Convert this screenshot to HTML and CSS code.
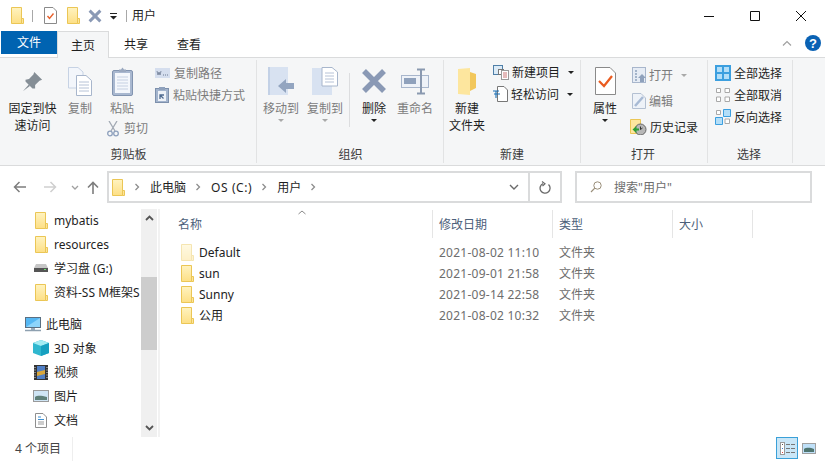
FILE: index.html
```html
<!DOCTYPE html>
<html lang="zh">
<head>
<meta charset="utf-8">
<title>用户</title>
<link rel="stylesheet" href="styles.css">
</head>
<body>
<svg class="defs" width="0" height="0" aria-hidden="true">
  <defs>
    <linearGradient id="fg" x1="0" y1="0" x2="0" y2="1"><stop offset="0" stop-color="#fff3c0"/><stop offset="1" stop-color="#fddf85"/></linearGradient>
    <symbol id="folder" viewBox="0 0 13 17">
      <path d="M.5.5H10.5V16.5H.5Z" fill="url(#fg)" stroke="#ebc655"/>
      <path d="M10.5 11.5H12.5V16.5H10.5Z" fill="#fde49a" stroke="#ebc655"/>
    </symbol>
    <symbol id="chev" viewBox="0 0 6 8"><path d="M1.5 1L4.500 4L1.500 7" fill="none" stroke="#8d8d8d" stroke-width="1.300"/></symbol>
    <symbol id="x" viewBox="0 0 26 26"><path d="M3 3L23 23M23 3L3 23" stroke="#8a99b5" stroke-width="5.500" fill="none"/></symbol>
  </defs>
</svg>
<div class="window">
  <header class="titlebar">
    <svg class="tb-folder" width="13" height="17"><use href="#folder"/></svg>
    <span class="tb-sep"></span>
    <svg class="tb-doc" width="13" height="17" viewBox="0 0 13 17"><path d="M.5.5H9L12.500 4V16.500H.5Z" fill="#fff" stroke="#8a8a8a"/><path d="M3.500 9L5.500 11.500L9.500 6.500" fill="none" stroke="#e8602c" stroke-width="1.400"/></svg>
    <svg class="tb-folder2" width="13" height="17"><use href="#folder"/></svg>
    <svg class="tb-x" width="14" height="14"><use href="#x"/></svg>
    <svg class="tb-caret" width="7" height="7" viewBox="0 0 7 7"><path d="M0 0H7V1H0ZM0 3H7L3.500 6.500Z" fill="#222"/></svg>
    <span class="tb-sep tb-sep2"></span>
    <span class="tb-title">用户</span>
    <div class="winctl">
      <svg width="12" height="12" viewBox="0 0 12 12"><path d="M1 6.500H11" stroke="#111"/></svg>
      <svg width="12" height="12" viewBox="0 0 12 12"><path d="M1.500 1.500H10.500V10.500H1.500Z" fill="none" stroke="#111"/></svg>
      <svg width="12" height="12" viewBox="0 0 12 12"><path d="M1 1L11 11M11 1L1 11" stroke="#111" fill="none"/></svg>
    </div>
  </header>
  <nav class="tabs">
    <span class="tab tab-file">文件</span>
    <span class="tab tab-active">主页</span>
    <span class="tab tab-share">共享</span>
    <span class="tab tab-view">查看</span>
    <span class="tabs-right">
      <svg width="10" height="6" viewBox="0 0 10 6"><path d="M1 5.500L5 1.500L9 5.500" fill="none" stroke="#a0a0a0" stroke-width="1.200"/></svg>
      <svg width="16" height="16" viewBox="0 0 16 16"><circle cx="8" cy="8" r="8" fill="#0a62b4"/><text x="8" y="12.500" text-anchor="middle" class="help-q">?</text></svg>
    </span>
  </nav>
  <section class="ribbon">
    <div class="group g-clip">
      <div class="g-body">
        <div class="big w57">
          <span class="big-icon"><svg width="21" height="21" viewBox="0 0 24 24"><path d="M14 1L23 10L20 11L15 16L15 20L12 20L4 12L4 10L8 9L13 4Z" fill="#858e96"/><path d="M8 15L1 23L9 17Z" fill="#858e96"/></svg></span>
          <span class="lbl">固定到快<br>速访问</span>
        </div>
        <div class="big w38 off">
          <span class="big-icon"><svg width="24" height="29" viewBox="0 0 24 29"><path d="M.5.500H10L15 5V21H.5Z" fill="#f3f6fb" stroke="#c6d2e4"/><path d="M8.500 8.500H18L23.500 13.500V28.500H8.500Z" fill="#fff" stroke="#a8b6cc"/><path d="M11 15H21M11 18H21M11 21H21M11 24H21" stroke="#b6c2d6"/></svg></span>
          <span class="lbl">复制</span>
        </div>
        <div class="col-paste w46 off">
          <div class="big">
            <span class="big-icon"><svg width="21" height="29" viewBox="0 0 21 29"><rect x=".5" y="3.500" width="20" height="25" rx="1.500" fill="#a9b8d0" stroke="#8294b0"/><rect x="3" y="6" width="15" height="20" fill="#f4f7fc"/><path d="M5 10H16M5 13H16M5 16H16M5 19H16M5 22H16" stroke="#c5d0e2"/><path d="M7 5V2.500H9L10.500 .5L12 2.500H14V5Z" fill="#9aa8bf"/></svg></span>
            <span class="lbl">粘贴</span>
          </div>
          <div class="cut"><svg width="12" height="16" viewBox="0 0 12 16"><path d="M2 0L8 10M10 0L4 10" stroke="#a2a9b4" stroke-width="1.300" fill="none"/><circle cx="3" cy="12.500" r="2.300" fill="none" stroke="#8ea0bd" stroke-width="1.300"/><circle cx="9" cy="12.500" r="2.300" fill="none" stroke="#8ea0bd" stroke-width="1.300"/></svg><span>剪切</span></div>
        </div>
        <div class="smalls off c-clip">
          <div class="row"><svg width="15" height="10" viewBox="0 0 15 10"><rect width="15" height="10" fill="#d5deee"/><path d="M2 3L3 7L4 4L5 7L6 3" fill="none" stroke="#6c7a92" stroke-width=".8"/><path d="M8 7H9M10 7H11M12 7H13" stroke="#6c7a92"/></svg><span>复制路径</span></div>
          <div class="row"><svg width="14" height="16" viewBox="0 0 14 16"><rect x=".5" y="1.500" width="13" height="14" fill="#a3b4cd" stroke="#7d90ac"/><rect x="3" y="4" width="8" height="10" fill="#eef2f8"/><rect x="4" y="0" width="6" height="3" fill="#8fa1bc"/><path d="M5 12V8H9M5 8L8.500 11.500" stroke="#4f6b90" stroke-width="1.300" fill="none"/></svg><span>粘贴快捷方式</span></div>
        </div>
      </div>
      <div class="g-label">剪贴板</div>
    </div>
    <div class="group g-org">
      <div class="g-body">
        <div class="big w46 off">
          <span class="big-icon"><svg width="26" height="28" viewBox="0 0 26 28"><path d="M0 0H20V28H0Z" fill="#d8e2f1"/><path d="M0 0H2V28H0Z" fill="#c3d1e6"/><path d="M10 19L18 12V16H26V22H18V26Z" fill="#93a5c0"/></svg></span>
          <span class="lbl">移动到</span><i class="caret pale"></i>
        </div>
        <div class="big w42 off">
          <span class="big-icon"><svg width="26" height="28" viewBox="0 0 26 28"><path d="M0 1H20V28H0Z" fill="#d8e2f1"/><path d="M10 .5H20L25.500 5V19H10Z" fill="#fff" stroke="#a8b6cc"/><path d="M13 6H22M13 9H22M13 12H22M13 15H22" stroke="#b6c2d6"/></svg></span>
          <span class="lbl">复制到</span><i class="caret pale"></i>
        </div>
        <span class="mini-sep"></span>
        <div class="big w44">
          <span class="big-icon"><svg width="26" height="26"><use href="#x"/></svg></span>
          <span class="lbl">删除</span><i class="caret"></i>
        </div>
        <div class="big w38 off">
          <span class="big-icon"><svg width="28" height="27" viewBox="0 0 28 27"><rect x=".5" y="7.500" width="27" height="12" fill="#eef2f8" stroke="#a8b6cc"/><rect x="3" y="10" width="12" height="6" fill="#8fa1bc"/><path d="M16 1.500H24M20 1.500V25.500M16 25.500H24" stroke="#8a99b0" stroke-width="2"/></svg></span>
          <span class="lbl">重命名</span>
        </div>
      </div>
      <div class="g-label">组织</div>
    </div>
    <div class="group g-new">
      <div class="g-body">
        <div class="big w46">
          <span class="big-icon"><svg width="19" height="27" viewBox="0 0 19 27"><path d="M12 4L18 6V20L12 23Z" fill="#f2c75c"/><path d="M0 1L12 0V27L0 26Z" fill="#fde69e"/></svg></span>
          <span class="lbl">新建<br>文件夹</span>
        </div>
        <div class="smalls c-new">
          <div class="row"><svg width="16" height="15" viewBox="0 0 16 15"><rect x=".5" y=".5" width="9" height="9" fill="#dcebf7" stroke="#4f7fa8"/><rect x="5.500" y="4.500" width="5" height="5" fill="#fff" stroke="#777"/><rect x="8.500" y="5.500" width="7" height="9" fill="#fff" stroke="#9a9a9a"/><path d="M10 8H14M10 10H14M10 12H14" stroke="#c77"/></svg><span>新建项目</span><i class="caret"></i></div>
          <div class="row"><svg width="15" height="16" viewBox="0 0 15 16"><path d="M4.500.5H11L14.500 4V15.500H4.500Z" fill="#fff" stroke="#777"/><path d="M0 5H6M1 8H7M3 5V12" stroke="#1a6fb5" stroke-width="1.100" fill="none"/></svg><span>轻松访问</span><i class="caret"></i></div>
        </div>
      </div>
      <div class="g-label">新建</div>
    </div>
    <div class="group g-open">
      <div class="g-body">
        <div class="big w48">
          <span class="big-icon"><svg width="21" height="28" viewBox="0 0 21 28"><path d="M.5.500H15L20.500 6V27.500H.5Z" fill="#fff" stroke="#8a8a8a"/><path d="M4 14L9 19L17 9" fill="none" stroke="#ea5c20" stroke-width="2.200"/></svg></span>
          <span class="lbl">属性</span><i class="caret"></i>
        </div>
        <div class="smalls c-open">
          <div class="row off"><svg width="14" height="16" viewBox="0 0 14 16"><rect x=".5" y=".5" width="13" height="15" fill="#e6ecf5" stroke="#a8b6cc"/><path d="M3 4H5M3 7H5M3 10H5M3 13H5" stroke="#8fa1bc" stroke-width="1.500"/><path d="M10 7L14 11H12V15H8V11H6Z" fill="#8fa1bc"/></svg><span>打开</span><i class="caret pale"></i></div>
          <div class="row off"><svg width="14" height="16" viewBox="0 0 14 16"><path d="M.5.500H9L13.500 5V15.500H.5Z" fill="#eef2f8" stroke="#b4c0d2"/><path d="M3 13L11 4" stroke="#a8bad4" stroke-width="2.500"/></svg><span>编辑</span></div>
          <div class="row"><svg width="17" height="16" viewBox="0 0 17 16"><path d="M.5.500H10.500V14.500H.5Z" fill="#fde69e" stroke="#ebc655"/><circle cx="10.500" cy="10.500" r="5.500" fill="#b7b7b7" stroke="#666"/><path d="M10.500 7.500V10.500L12.500 9" stroke="#333" fill="none"/><path d="M2.500 10.500L6.500 7V9.500H9V11.500H6.500V14Z" fill="#2e9e33"/></svg><span>历史记录</span></div>
        </div>
      </div>
      <div class="g-label">打开</div>
    </div>
    <div class="group g-sel">
      <div class="g-body">
        <div class="smalls c-sel">
          <div class="row"><svg width="16" height="16" viewBox="0 0 16 16"><rect width="16" height="16" fill="#3c9fdf"/><path d="M2 2H7V7H2ZM9 2H14V7H9ZM2 9H7V14H2ZM9 9H14V14H9Z" fill="#b3def8"/></svg><span>全部选择</span></div>
          <div class="row"><svg width="16" height="16" viewBox="0 0 16 16"><path d="M1.500 1.500H5.500V5.500H1.500ZM10 1.500H14.500V5.500H10ZM1.500 10H5.500V14.500H1.500ZM10 10H14.500V14.500H10Z" fill="#fff" stroke="#a9a9a9"/></svg><span>全部取消</span></div>
          <div class="row"><svg width="16" height="16" viewBox="0 0 16 16"><path d="M1.500 1.500H5.500V5.500H1.500ZM10 10H14.500V14.500H10Z" fill="#fff" stroke="#a9a9a9"/><path d="M8.500 .5H15.500V7.500H8.500ZM.5 8.500H7.500V15.500H.5Z" fill="#b3def8" stroke="#3c9fdf"/></svg><span>反向选择</span></div>
        </div>
      </div>
      <div class="g-label">选择</div>
    </div>
  </section>
  <div class="addressbar">
    <div class="navbtns">
      <svg width="14" height="12" viewBox="0 0 14 12"><path d="M13 6H2M6.500 1L1.500 6L6.500 11" fill="none" stroke="#7d7d7d" stroke-width="1.500"/></svg>
      <svg width="14" height="12" viewBox="0 0 14 12"><path d="M1 6H12M7.500 1L12.500 6L7.500 11" fill="none" stroke="#cfcfcf" stroke-width="1.500"/></svg>
      <svg width="8" height="5" viewBox="0 0 8 5"><path d="M1 1L4 4L7 1" fill="none" stroke="#a0a0a0" stroke-width="1.300"/></svg>
      <svg width="12" height="13" viewBox="0 0 12 13"><path d="M6 13V2M1 6.500L6 1.500L11 6.500" fill="none" stroke="#7d7d7d" stroke-width="1.600"/></svg>
    </div>
    <div class="crumbs">
      <svg class="crumb-folder" width="13" height="17"><use href="#folder"/></svg>
      <svg width="6" height="8"><use href="#chev"/></svg>
      <span>此电脑</span>
      <svg width="6" height="8"><use href="#chev"/></svg>
      <span class="latin">OS (C:)</span>
      <svg width="6" height="8"><use href="#chev"/></svg>
      <span>用户</span>
      <svg width="6" height="8"><use href="#chev"/></svg>
      <span class="crumb-drop"><svg width="10" height="6" viewBox="0 0 10 6"><path d="M1 1L5 5L9 1" fill="none" stroke="#6a6a6a" stroke-width="1.400"/></svg></span>
      <span class="crumb-refresh"><svg width="12" height="13" viewBox="0 0 12 13"><path d="M9.500 3.500A5 5 0 1 1 4 2.600" fill="none" stroke="#6a6a6a" stroke-width="1.300"/><path d="M3 .5L6 2.700L3.500 5" fill="none" stroke="#6a6a6a" stroke-width="1.200"/></svg></span>
    </div>
    <div class="search">
      <svg width="12" height="12" viewBox="0 0 12 12"><circle cx="7.500" cy="4.500" r="3.700" fill="none" stroke="#9a8f7a"/><path d="M4.800 7.200L1 11" stroke="#9a8f7a" stroke-width="1.200"/></svg>
      <span>搜索"用户"</span>
    </div>
  </div>
  <main class="content">
    <aside class="sidebar">
      <div class="tree">
        <div class="node"><svg width="13" height="17"><use href="#folder"/></svg><span>mybatis</span></div>
        <div class="node"><svg width="13" height="17"><use href="#folder"/></svg><span>resources</span></div>
        <div class="node"><svg width="14" height="8" viewBox="0 0 14 8"><path d="M2 0H12L14 4V8H0V4Z" fill="#c6c6c6"/><rect y="4" width="14" height="4" fill="#555"/><rect x="10" y="5" width="2" height="1" fill="#6fe06f"/></svg><span>学习盘 (G:)</span></div>
        <div class="node"><svg width="13" height="17"><use href="#folder"/></svg><span class="clipname">资料-SS M框架S</span></div>
        <div class="node pc"><svg width="16" height="15" viewBox="0 0 16 15"><rect x=".5" y=".5" width="15" height="10" fill="#55b7f3" stroke="#5a6f82"/><path d="M1 10L15 1V10Z" fill="#8dd4fb"/><path d="M6 11H10V13H6Z" fill="#9ab"/><path d="M0 13.500H16" stroke="#8ea0b0" stroke-width="1.500"/></svg><span>此电脑</span></div>
        <div class="node"><svg width="16" height="16" viewBox="0 0 16 16"><path d="M8 0L16 3V13L8 16L0 13V3Z" fill="#2fb7cf"/><path d="M8 0L16 3L8 6L0 3Z" fill="#a5ecf3"/><path d="M8 6L16 3V13L8 16Z" fill="#17a0c0"/></svg><span>3D 对象</span></div>
        <div class="node"><svg width="14" height="15" viewBox="0 0 14 15"><rect width="14" height="15" fill="#333"/><rect x="3" y="1" width="8" height="13" fill="#4f7ec4"/><path d="M3 7L11 5V9L3 11Z" fill="#d9a63a"/><path d="M1 2V13M13 2V13" stroke="#ddd" stroke-dasharray="1 1.500"/></svg><span>视频</span></div>
        <div class="node"><svg width="16" height="12" viewBox="0 0 16 12"><rect x=".5" y=".5" width="15" height="11" fill="#cfe5f5" stroke="#9a9a9a"/><path d="M2 7C5 5 9 6 14 7V10H2Z" fill="#5f8079"/></svg><span>图片</span></div>
        <div class="node"><svg width="12" height="15" viewBox="0 0 12 15"><path d="M.5.500H8L11.500 4V14.500H.5Z" fill="#fff" stroke="#8f8f8f"/><path d="M3 4H6M3 6.500H9" stroke="#3d8fd1"/><path d="M3 9H9M3 11H9" stroke="#9a9a9a"/></svg><span>文档</span></div>
      </div>
      <div class="scrollbar">
        <svg width="9" height="6" viewBox="0 0 9 6"><path d="M1 5L4.500 1.500L8 5" fill="none" stroke="#555" stroke-width="1.800"/></svg>
        <span class="thumb"></span>
        <svg width="9" height="6" viewBox="0 0 9 6"><path d="M1 1L4.500 4.500L8 1" fill="none" stroke="#555" stroke-width="1.800"/></svg>
      </div>
    </aside>
    <section class="files">
      <div class="thead">
        <span class="th th-name">名称<svg class="sort" width="8" height="5" viewBox="0 0 8 5"><path d="M.5 4L4 1L7.500 4" fill="none" stroke="#8a8a8a"/></svg></span>
        <span class="th th-date">修改日期</span>
        <span class="th th-type">类型</span>
        <span class="th th-size">大小</span>
      </div>
      <div class="frow"><span class="fname"><svg class="faded" width="13" height="17"><use href="#folder"/></svg>Default</span><span class="fdate">2021-08-02 11:10</span><span class="ftype">文件夹</span></div>
      <div class="frow"><span class="fname"><svg width="13" height="17"><use href="#folder"/></svg>sun</span><span class="fdate">2021-09-01 21:58</span><span class="ftype">文件夹</span></div>
      <div class="frow"><span class="fname"><svg width="13" height="17"><use href="#folder"/></svg>Sunny</span><span class="fdate">2021-09-14 22:58</span><span class="ftype">文件夹</span></div>
      <div class="frow"><span class="fname"><svg width="13" height="17"><use href="#folder"/></svg>公用</span><span class="fdate">2021-08-02 10:32</span><span class="ftype">文件夹</span></div>
    </section>
  </main>
  <footer class="status">
    <span class="count">4 个项目</span>
    <span class="views">
      <span class="view-on"><svg width="15" height="13" viewBox="0 0 15 13"><rect x=".5" y=".5" width="4" height="12" fill="#fff" stroke="#9a9a9a"/><path d="M2 2.500H3" stroke="#555"/><path d="M2 6.500H3" stroke="#3a7fd5"/><path d="M2 10.500H3" stroke="#d44"/><path d="M6 2.500H10M11 2.500H15M6 6.500H10M11 6.500H15M6 10.500H10M11 10.500H15" stroke="#777"/></svg></span>
      <svg width="14" height="11" viewBox="0 0 14 11"><rect x=".5" y=".5" width="13" height="10" fill="#bfe0f8" stroke="#a0a0a0"/><path d="M2 6C5 4 9 5 12 6V9H2Z" fill="#4f7570"/></svg>
    </span>
  </footer>
</div>
</body>
</html>
```
FILE: styles.css
```css
* { box-sizing: border-box; }
html, body { margin: 0; padding: 0; }
body { width: 825px; height: 461px; overflow: hidden; background: #fff; font: 12px/17px "Noto Sans", "Noto Sans CJK SC", sans-serif; color: #1e1e1e; }
.defs { display: block; height: 0; }
svg { display: block; flex: none; }
.window { width: 825px; height: 461px; display: flex; flex-direction: column; }

.titlebar { height: 31px; display: flex; align-items: center; padding-left: 11px; }
.tb-sep { width: 1px; height: 12px; background: #a8a8a8; margin: 0 0 0 8px; }
.tb-doc { margin-left: 11px; }
.tb-folder2 { margin-left: 10px; }
.tb-x { margin-left: 8px; }
.tb-caret { margin-left: 8px; margin-top: 2px; }
.tb-sep2 { margin-left: 9px; }
.tb-title { margin-left: 5px; color: #222; }
.winctl { margin-left: auto; display: flex; gap: 34px; padding-right: 18px; }

.tabs { height: 27px; display: flex; position: relative; border-bottom: 1px solid #dadbdc; padding-left: 1px; }
.tab { display: flex; align-items: center; justify-content: center; height: 26px; }
.tab-file { width: 56px; height: 23px; background: #0063b1; color: #fff; }
.tab-active { width: 52px; height: 27px; background: #f5f6f7; border: 1px solid #dadbdc; border-bottom: 0; position: relative; z-index: 1; }
.tab-share { width: 54px; }
.tab-view { width: 52px; }
.tabs-right { margin-left: auto; display: flex; align-items: center; gap: 13px; padding: 0 4px 3px 0; height: 26px; }
.help-q { font: bold 13px "Liberation Sans", sans-serif; fill: #fff; }

.ribbon { height: 108px; background: #f5f6f7; border-bottom: 1px solid #dadbdc; display: flex; }
.group { margin: 2px 0; border-right: 1px solid #e2e3e4; display: flex; flex-direction: column; padding-top: 2px; }
.g-clip { width: 257px; padding-left: 4px; }
.g-org { width: 187px; padding-left: 1px; }
.g-new { width: 137px; }
.g-open { width: 127px; }
.g-sel { width: 85px; }
.g-body { display: flex; flex: 1; }
.g-label { height: 17px; text-align: center; color: #3c3c3c; }
.g-clip .g-label { padding-right: 3px; }
.g-open .g-label, .g-sel .g-label { padding-right: 2px; }

.big { display: flex; flex-direction: column; align-items: center; padding-top: 4px; text-align: center; flex: none; }
.big-icon { height: 30px; display: flex; align-items: center; justify-content: center; margin-bottom: 4px; }
.lbl { display: block; white-space: nowrap; }
.w38 { width: 38px; } .w42 { width: 42px; } .w44 { width: 44px; } .w46 { width: 46px; } .w48 { width: 48px; } .w57 { width: 57px; }
.off { color: #7c7c7c; }
.row.off span { color: #7c7c7c; }
.col-paste { flex: none; }
.cut { display: flex; align-items: center; gap: 5px; padding-left: 8px; height: 17px; margin-top: 3px; white-space: nowrap; }

.smalls { display: flex; flex-direction: column; }
.row { display: flex; align-items: center; height: 22px; white-space: nowrap; }
.c-clip { margin-left: 10px; }
.c-clip .row { gap: 4px; }
.c-new { margin-left: 3px; margin-top: -1px; }
.c-new .row { gap: 3px; }
.c-open { margin-left: 1px; }
.c-open .row { height: 26px; gap: 3px; }
.c-open .row:nth-child(-n+2) { padding-left: 2px; }
.c-sel { margin-left: 7px; }
.c-sel .row { gap: 3px; }

.caret { display: block; width: 0; height: 0; border: 3px solid transparent; border-top: 3px solid #222; border-bottom: 0; flex: none; }
.big .caret { margin-top: 2px; }
.row .caret { margin-left: 5px; }
.caret.pale { border-top-color: #a9a9a9; }
.mini-sep { width: 1px; height: 54px; background: #dcdddf; margin: 11px 2px 0 3px; flex: none; }

.addressbar { height: 43px; flex: none; display: flex; align-items: flex-start; padding-top: 5px; }
.navbtns { width: 107px; height: 32px; display: flex; align-items: center; padding-left: 13px; gap: 16px; }
.navbtns svg:nth-child(3) { margin-left: -2px; }
.navbtns svg:nth-child(4) { margin-left: -8px; }
.crumbs { width: 455px; height: 32px; border: 2px solid #dadbdc; display: flex; align-items: center; padding-left: 3px; }
.crumbs > svg { margin: 0 10px 0 9px; }
.crumbs .crumb-folder { margin: 0; }
.latin { letter-spacing: .6px; }
.crumb-drop { margin-left: auto; width: 30px; height: 100%; display: flex; align-items: center; justify-content: center; border-right: 2px solid #dadbdc; }
.crumb-refresh { width: 30px; height: 100%; display: flex; align-items: center; justify-content: center; }
.search { width: 237px; height: 32px; border: 2px solid #dadbdc; margin-left: 13px; display: flex; align-items: center; padding-left: 13px; gap: 12px; color: #6d6d6d; }

.content { flex: none; display: flex; height: 228px; }
.sidebar { width: 160px; display: flex; border-right: 2px solid #f2f2f2; flex: none; }
.tree { width: 141px; overflow: hidden; display: flex; flex-direction: column; }
.node { height: 24px; flex: none; display: grid; grid-template-columns: 54px auto; align-items: center; white-space: nowrap; }
.node:first-child { height: 23px; }
.node svg { justify-self: center; margin-left: 28px; }
.node.pc { margin-top: 8px; grid-template-columns: 46px auto; }
.node.pc svg { margin-left: 25px; justify-self: start; }
.clipname { overflow: hidden; }
.scrollbar { width: 16px; background: #f0f0f0; display: flex; flex-direction: column; align-items: center; padding: 6px 0; position: relative; justify-content: space-between; }
.thumb { position: absolute; left: 0; top: 68px; width: 16px; height: 73px; background: #cdcdcd; }

.files { flex: 1; position: relative; }
.thead { height: 28px; display: flex; }
.th { display: flex; align-items: center; height: 28px; margin-top: 1px; color: #4c607a; padding-left: 6px; border-right: 1px solid #e5e5e5; position: relative; }
.th-name { width: 273px; padding-left: 18px; }
.th-date { width: 120px; }
.th-type { width: 120px; }
.th-size { width: 80px; }
.sort { position: absolute; left: 138px; top: 0; }
.frow { height: 21px; display: flex; align-items: center; }
.thead + .frow { margin-top: 5px; }
.fname { width: 274px; padding-left: 21px; display: flex; align-items: center; gap: 5px; color: #222; }
.fdate { width: 120px; padding-left: 5px; color: #6d6d6d; white-space: nowrap; letter-spacing: .25px; }
.ftype { padding-left: 5px; color: #6d6d6d; }
.faded { opacity: .45; }

.status { height: 24px; flex: none; display: flex; align-items: flex-start; padding-left: 15px; }
.count { height: 24px; line-height: 24px; width: 58px; border-right: 1px solid #eee; color: #444; }
.views { margin-left: auto; display: flex; align-items: center; gap: 4px; padding-right: 9px; }
.view-on { width: 22px; height: 22px; background: #c9e6f7; border: 1px solid #3aa0d8; display: flex; align-items: center; justify-content: center; }
```
